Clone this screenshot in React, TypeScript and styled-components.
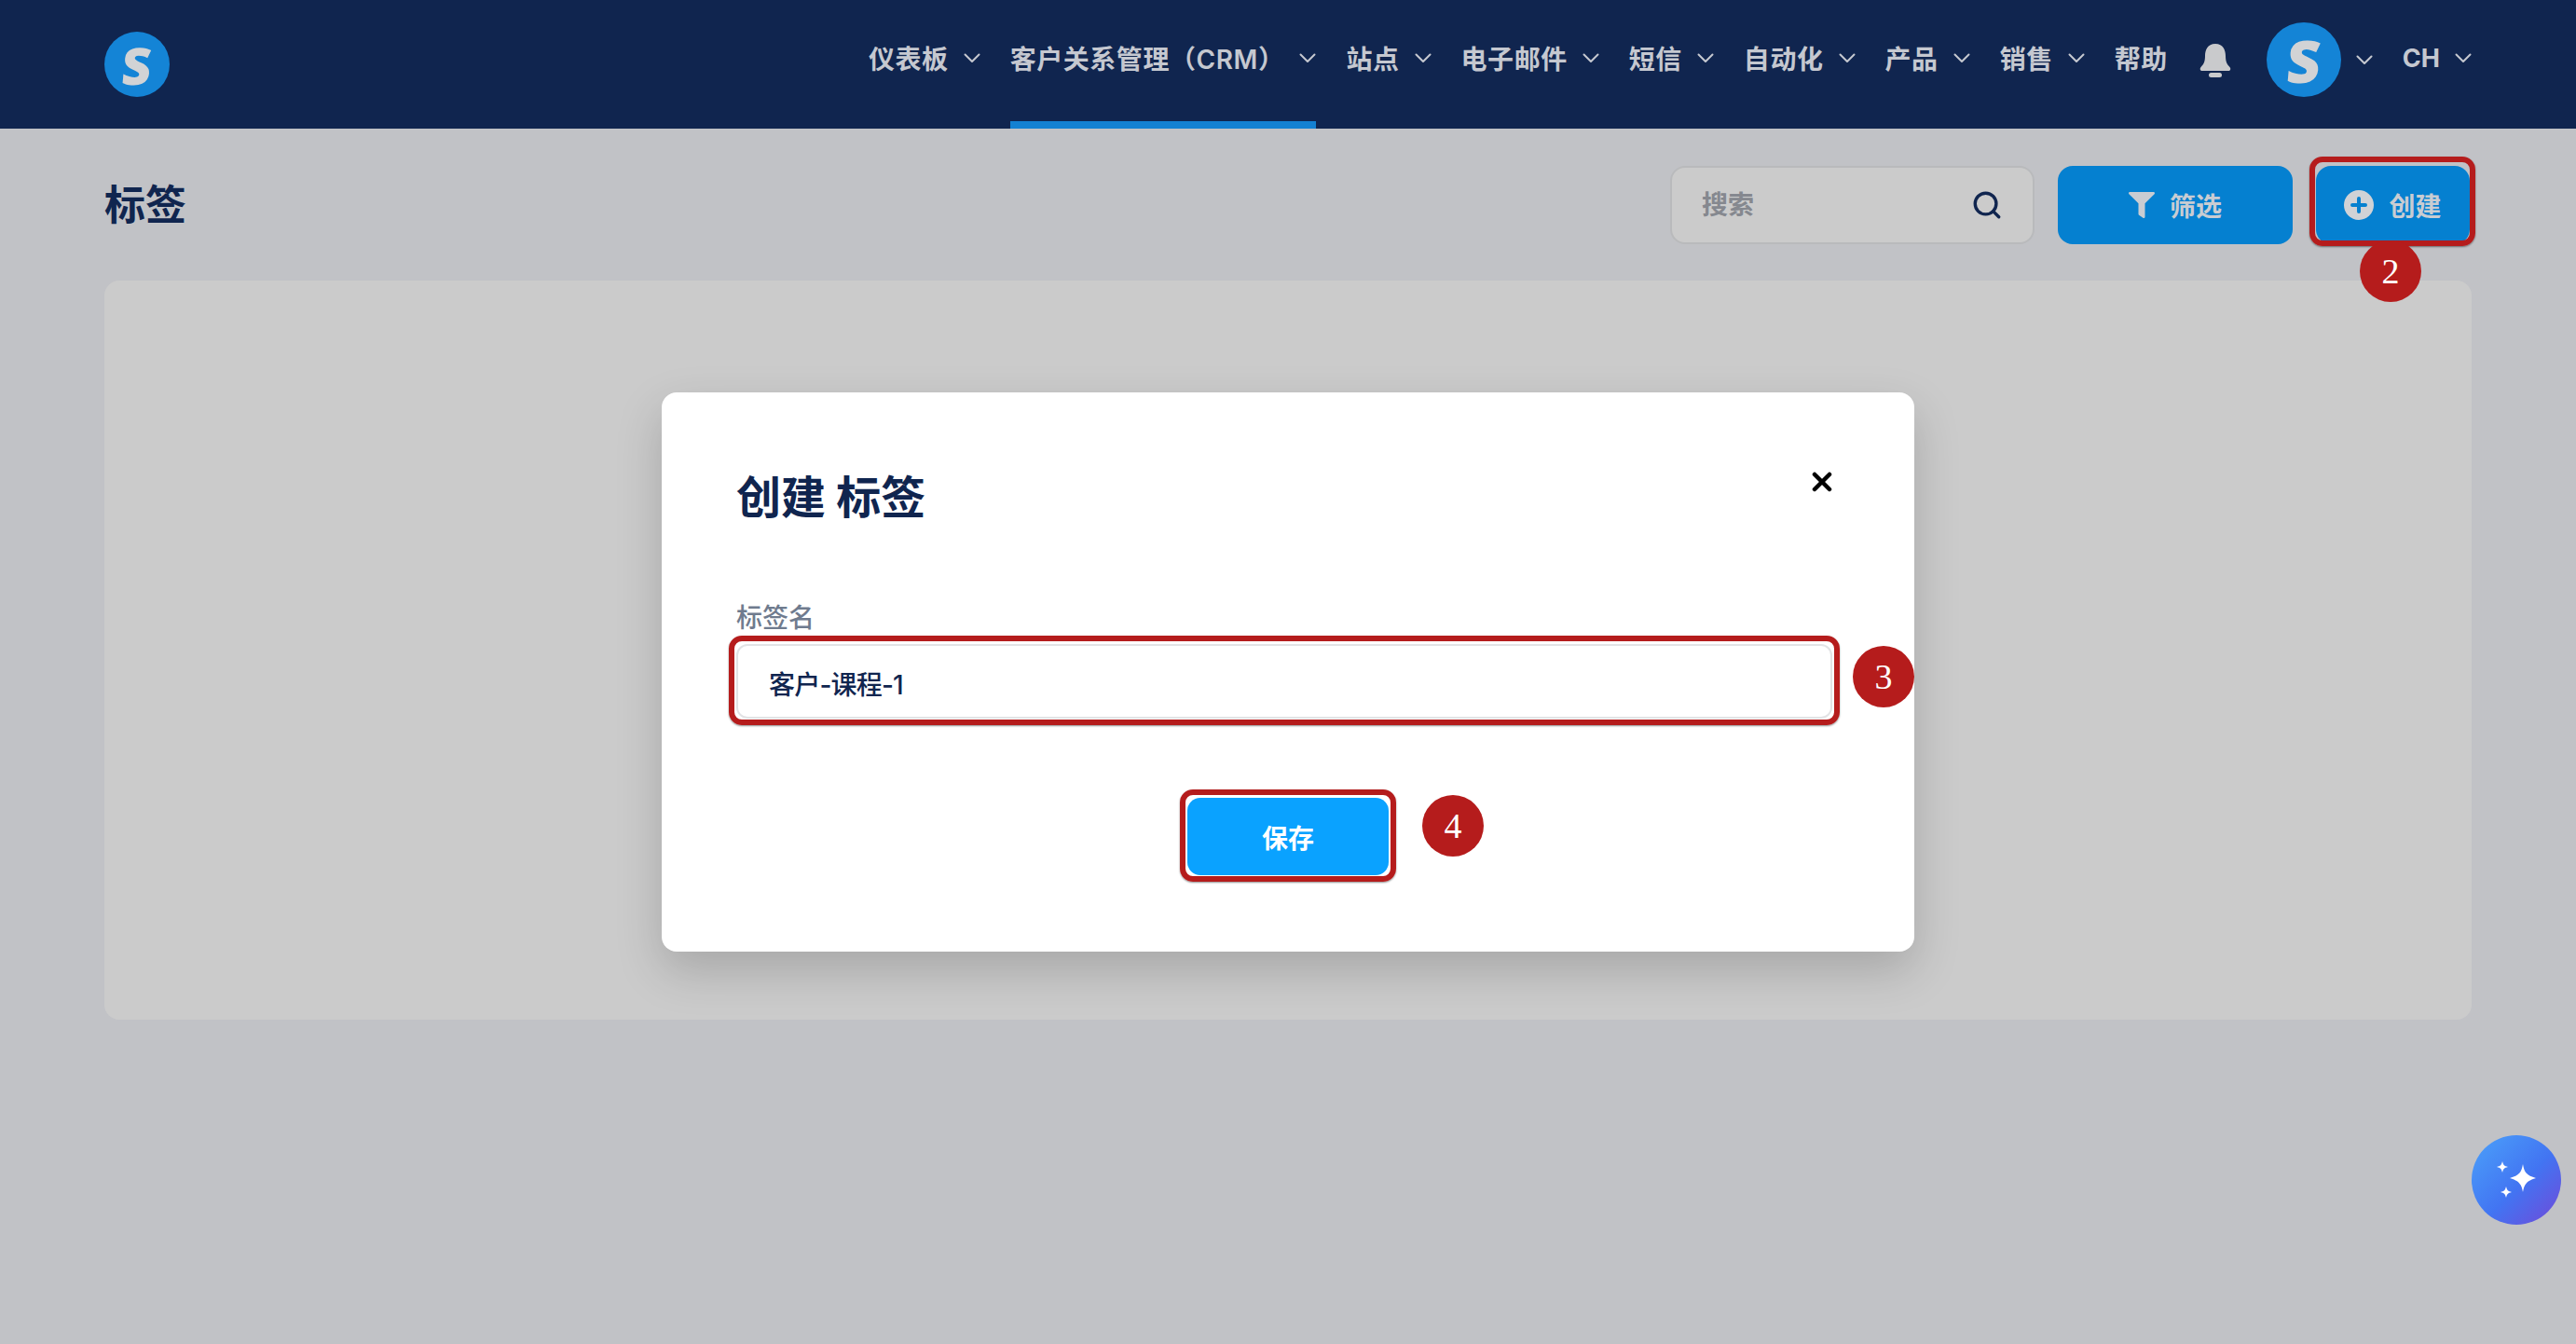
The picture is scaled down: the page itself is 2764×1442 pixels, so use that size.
import { createGlobalStyle, styled } from "styled-components";
import { Search, X } from "lucide-react";
import { FaFilter } from "react-icons/fa";

const GlobalStyle = createGlobalStyle`
  html, body {
    margin: 0;
    padding: 0;
    min-height: 100%;
    background: #c1c2c6;
  }
  * {
    box-sizing: border-box;
  }
  body {
    font-family: "Inter", "Noto Sans CJK SC", sans-serif;
  }
`;

const Page = styled.div`
  position: relative;
  width: 2764px;
  height: 1442px;
  overflow: hidden;
  background: #c1c2c6;
`;

const Header = styled.header`
  display: flex;
  align-items: stretch;
  justify-content: space-between;
  height: 138px;
  padding: 0 112px;
  background: #10254f;
`;

const Brand = styled.div`
  display: flex;
  align-items: center;
`;

const LogoMark = styled.div<{ $size: number }>`
  display: flex;
  align-items: center;
  justify-content: center;
  width: ${(p) => p.$size}px;
  height: ${(p) => p.$size}px;
  border-radius: 50%;
  background: #1484d6;
  color: #d2d3d5;
  font-family: "Open Sans", sans-serif;
  font-weight: 800;
  font-size: ${(p) => Math.round(p.$size * 0.79)}px;
  line-height: 1;
`;

const LogoLetter = styled.span`
  display: block;
  transform: skewX(-5deg);
`;

const Nav = styled.nav`
  display: flex;
  align-items: stretch;
  gap: 32px;
`;

const NavItem = styled.div<{ $active?: boolean }>`
  display: flex;
  align-items: center;
  gap: 16px;
  padding-bottom: 6px;
  border-bottom: 8px solid ${(p) => (p.$active ? "#1481d2" : "transparent")};
  color: #c5c8d0;
  font-size: 28px;
  font-weight: 600;
  letter-spacing: 0.55px;
  white-space: nowrap;
`;

const LangItem = styled(NavItem)`
  font-size: 27px;
  font-weight: 700;
  letter-spacing: 0;
`;

const BellSlot = styled.div`
  display: flex;
  align-items: center;
  padding: 0 6px 8px 2px;
  color: #c9cacc;
`;

const AvatarItem = styled.div`
  display: flex;
  align-items: center;
  gap: 16px;
  padding-bottom: 10px;
`;

const Chevron = () => (
  <svg width="18" height="11" viewBox="0 0 18 11" fill="none">
    <path d="M1.5 1.5 L9 9 L16.500 1.5" stroke="#c5c8d0" strokeWidth="2" strokeLinecap="round" strokeLinejoin="round" />
  </svg>
);

const Bell = () => (
  <svg width="34" height="36" viewBox="0 0 34 36" fill="currentColor">
    <path d="M17 0 C8.500 0 6 7 6 13 C6 19 4.500 22 1.500 25 C0 26.800 0.800 29 3 29 L31 29 C33.200 29 34 26.800 32.500 25 C29.500 22 28 19 28 13 C28 7 25.500 0 17 0 Z" />
    <rect x="10" y="31" width="14" height="5" rx="2.500" />
  </svg>
);

const Toolbar = styled.div`
  display: flex;
  align-items: center;
  justify-content: space-between;
  height: 84px;
  margin: 40px 114px 39px 112px;
`;

const Title = styled.h1`
  margin: -6px 0 0;
  color: #10254f;
  font-size: 44px;
  font-weight: 700;
`;

const Actions = styled.div`
  display: flex;
  align-items: stretch;
  gap: 25px;
  height: 84px;
`;

const SearchBox = styled.div`
  display: flex;
  align-items: center;
  justify-content: space-between;
  width: 391px;
  padding: 0 32px 0 32px;
  border: 2px solid #b9babc;
  border-radius: 16px;
  background: #cbcbcb;
  color: #10254f;
`;

const Placeholder = styled.span`
  margin-top: -5px;
  color: #85888f;
  font-size: 28px;
  font-weight: 600;
`;

const ActionButton = styled.div<{ $width: number }>`
  display: flex;
  align-items: center;
  justify-content: center;
  gap: 16px;
  width: ${(p) => p.$width}px;
  border-radius: 16px;
  background: #0580d0;
  color: #c9ccd2;
  font-size: 28px;
  font-weight: 600;
`;

const Card = styled.div`
  height: 793px;
  margin: 0 112px;
  border-radius: 16px;
  background: #cbcbcb;
`;

const Backdrop = styled.div`
  position: absolute;
  inset: 0;
  display: flex;
  justify-content: center;
  padding-top: 421px;
`;

const Modal = styled.div`
  position: relative;
  width: 1344px;
  height: 600px;
  padding: 80px 80px 0;
  border-radius: 16px;
  background: #ffffff;
  box-shadow: 0 20px 50px rgba(0, 0, 0, 0.18);
`;

const ModalHead = styled.div`
  display: flex;
  align-items: flex-start;
  justify-content: space-between;
`;

const ModalTitle = styled.h2`
  margin: 0;
  color: #10254f;
  font-size: 48px;
  line-height: 66px;
  font-weight: 700;
`;

const CloseButton = styled.div`
  display: flex;
  transform: translateX(-3px);
  color: #000000;
`;

const Field = styled.div`
  display: flex;
  flex-direction: column;
  margin-top: 78px;
`;

const FieldLabel = styled.label`
  color: #6f7b8e;
  font-size: 28px;
  line-height: 36px;
  font-weight: 500;
`;

const InputWrap = styled.div`
  position: relative;
  margin-top: 10px;
  margin-right: 8px;
`;

const TextInput = styled.div`
  display: flex;
  align-items: center;
  height: 80px;
  padding: 3px 33px 0;
  border: 2px solid #e2e3e5;
  border-radius: 12px;
  background: #ffffff;
  color: #10254f;
  font-size: 28px;
  font-weight: 500;
  letter-spacing: -0.8px;
`;

const ModalFooter = styled.div`
  display: flex;
  justify-content: center;
  margin-top: 85px;
`;

const SaveWrap = styled.div`
  position: relative;
`;

const SaveButton = styled.div`
  display: flex;
  align-items: center;
  justify-content: center;
  width: 216px;
  height: 83px;
  border-radius: 14px;
  background: #0aa2ff;
  color: #ffffff;
  font-size: 28px;
  font-weight: 600;
`;

const Highlight = styled.span<{ $top?: number; $right?: number; $bottom?: number; $left?: number }>`
  position: absolute;
  top: ${(p) => p.$top ?? -9}px;
  right: ${(p) => p.$right ?? -8}px;
  bottom: ${(p) => p.$bottom ?? -7}px;
  left: ${(p) => p.$left ?? -8}px;
  border: 6px solid #b51c1c;
  border-radius: 14px;
  box-shadow: 0 1px 2px rgba(0, 0, 0, 0.45);
  pointer-events: none;
`;

const CreateWrap = styled.div`
  position: relative;
  display: flex;
`;

const StepBadge = styled.span`
  position: absolute;
  display: flex;
  align-items: center;
  justify-content: center;
  width: 66px;
  height: 66px;
  border-radius: 50%;
  background: #b51c1c;
  color: #ffffff;
  font-family: "Liberation Serif", "Noto Sans", serif;
  font-size: 38px;
  font-weight: 400;
`;

const BadgeBelow = styled(StepBadge)`
  top: 80px;
  left: 47px;
`;

const BadgeRight = styled(StepBadge)<{ $gap: number; $lift: number }>`
  top: 50%;
  left: 100%;
  margin-top: ${(p) => -33 - p.$lift}px;
  margin-left: ${(p) => p.$gap}px;
`;

const AssistButton = styled.div`
  position: absolute;
  top: 1218px;
  left: 2652px;
  display: flex;
  align-items: center;
  justify-content: center;
  width: 96px;
  height: 96px;
  border-radius: 50%;
  background: linear-gradient(135deg, #4ba2fa 0%, #4274f2 55%, #7248d8 100%);
`;

const PlusCircle = () => (
  <svg width="32" height="32" viewBox="0 0 32 32">
    <circle cx="16" cy="16" r="16" fill="#d0d2d6" />
    <path d="M16 9 V23 M9 16 H23" stroke="#0580d0" strokeWidth="4" strokeLinecap="round" />
  </svg>
);

const Sparkles = () => (
  <svg width="44" height="44" viewBox="0 0 44 44" fill="#ffffff">
    <path d="M29 5 C30.500 14 33 17 43 20 C33 23 30.500 26.500 29 35 C27.500 26.500 25 23 15 20 C25 17 27.500 14 29 5 Z" />
    <path d="M7 2 C8 6 9 7 13 8 C9 9 8 10 7 14 C6 10 5 9 1 8 C5 7 6 6 7 2 Z" />
    <path d="M11 29 C12 33 13 34 17 35 C13 36 12 37 11 41 C10 37 9 36 5 35 C9 34 10 33 11 29 Z" />
  </svg>
);

const navItems = [
  { label: "仪表板" },
  { label: "客户关系管理（CRM）", active: true },
  { label: "站点" },
  { label: "电子邮件" },
  { label: "短信" },
  { label: "自动化" },
  { label: "产品" },
  { label: "销售" },
];

export default function App() {
  return (
    <Page>
      <GlobalStyle />
      <Header>
        <Brand>
          <LogoMark $size={70}>
            <LogoLetter>S</LogoLetter>
          </LogoMark>
        </Brand>
        <Nav>
          {navItems.map((item) => (
            <NavItem key={item.label} $active={item.active}>
              {item.label}
              <Chevron />
            </NavItem>
          ))}
          <NavItem>帮助</NavItem>
          <BellSlot>
            <Bell />
          </BellSlot>
          <AvatarItem>
            <LogoMark $size={80}>
              <LogoLetter>S</LogoLetter>
            </LogoMark>
            <Chevron />
          </AvatarItem>
          <LangItem>
            CH
            <Chevron />
          </LangItem>
        </Nav>
      </Header>

      <Toolbar>
        <Title>标签</Title>
        <Actions>
          <SearchBox>
            <Placeholder>搜索</Placeholder>
            <Search size={34} strokeWidth={2.4} />
          </SearchBox>
          <ActionButton $width={252}>
            <FaFilter size={28} />
            筛选
          </ActionButton>
          <CreateWrap>
            <ActionButton $width={165}>
              <PlusCircle />
              创建
            </ActionButton>
            <Highlight $top={-10} $right={-6} $bottom={-2} $left={-7} />
            <BadgeBelow>2</BadgeBelow>
          </CreateWrap>
        </Actions>
      </Toolbar>

      <Card />

      <Backdrop>
        <Modal>
          <ModalHead>
            <ModalTitle>创建 标签</ModalTitle>
            <CloseButton>
              <X size={32} strokeWidth={3.4} />
            </CloseButton>
          </ModalHead>
          <Field>
            <FieldLabel>标签名</FieldLabel>
            <InputWrap>
              <TextInput>客户-课程-1</TextInput>
              <Highlight />
              <BadgeRight $gap={22} $lift={5}>3</BadgeRight>
            </InputWrap>
          </Field>
          <ModalFooter>
            <SaveWrap>
              <SaveButton>保存</SaveButton>
              <Highlight />
              <BadgeRight $gap={36} $lift={12}>4</BadgeRight>
            </SaveWrap>
          </ModalFooter>
        </Modal>
      </Backdrop>

      <AssistButton>
        <Sparkles />
      </AssistButton>
    </Page>
  );
}
